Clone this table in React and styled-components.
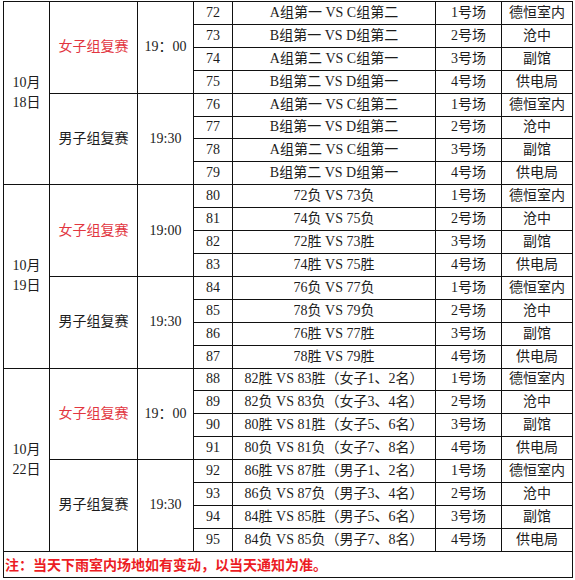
import React from "react";
import styled, { createGlobalStyle } from "styled-components";

const GlobalStyle = createGlobalStyle`
  html, body {
    margin: 0;
    padding: 0;
    background: #fff;
  }
  body {
    font-family: "Liberation Serif", "Noto Sans CJK SC", serif;
    color: #1c1c1c;
  }
`;

const Page = styled.div`
  padding: 1px 0 0 3px;
`;

const Table = styled.table`
  border-collapse: collapse;
  table-layout: fixed;
  width: 570px;
  font-size: 14px;
`;

const Col = styled.col`
  width: ${({ $w }) => $w}px;
`;

const Cell = styled.td`
  border: 1px solid #111;
  padding: 0;
  height: 21.92px;
  text-align: center;
  vertical-align: middle;
  line-height: 18px;
  white-space: nowrap;
  overflow: hidden;
`;

const DateCell = styled(Cell)`
  line-height: 20px;
  white-space: normal;
`;

const GroupCell = styled(Cell)`
  color: ${({ $women }) => ($women ? "#e2363f" : "#1c1c1c")};
`;

const NoteCell = styled(Cell)`
  height: 25px;
  text-align: left;
  padding-left: 1px;
  color: #ec1c24;
  font-weight: bold;
  font-family: "Noto Sans CJK SC", sans-serif;
`;

const venues = [
  ["1号场", "德恒室内"],
  ["2号场", "沧中"],
  ["3号场", "副馆"],
  ["4号场", "供电局"],
];

const days = [
  {
    date: ["10月", "18日"],
    groups: [
      {
        name: "女子组复赛",
        women: true,
        time: "19：00",
        start: 72,
        games: [
          "A组第一 VS C组第二",
          "B组第一 VS D组第二",
          "A组第二 VS C组第一",
          "B组第二 VS D组第一",
        ],
      },
      {
        name: "男子组复赛",
        time: "19:30",
        start: 76,
        games: [
          "A组第一 VS C组第二",
          "B组第一 VS D组第二",
          "A组第二 VS C组第一",
          "B组第二 VS D组第一",
        ],
      },
    ],
  },
  {
    date: ["10月", "19日"],
    groups: [
      {
        name: "女子组复赛",
        women: true,
        time: "19:00",
        start: 80,
        games: ["72负 VS 73负", "74负 VS 75负", "72胜 VS 73胜", "74胜 VS 75胜"],
      },
      {
        name: "男子组复赛",
        time: "19:30",
        start: 84,
        games: ["76负 VS 77负", "78负 VS 79负", "76胜 VS 77胜", "78胜 VS 79胜"],
      },
    ],
  },
  {
    date: ["10月", "22日"],
    groups: [
      {
        name: "女子组复赛",
        women: true,
        time: "19：00",
        start: 88,
        games: [
          "82胜 VS 83胜（女子1、2名）",
          "82负 VS 83负（女子3、4名）",
          "80胜 VS 81胜（女子5、6名）",
          "80负 VS 81负（女子7、8名）",
        ],
      },
      {
        name: "男子组复赛",
        time: "19:30",
        start: 92,
        games: [
          "86胜 VS 87胜（男子1、2名）",
          "86负 VS 87负（男子3、4名）",
          "84胜 VS 85胜（男子5、6名）",
          "84负 VS 85负（男子7、8名）",
        ],
      },
    ],
  },
];

const widths = [46, 88, 56, 39, 203, 66, 71];

export default function App() {
  return (
    <Page>
      <GlobalStyle />
      <Table>
        <colgroup>
          {widths.map((w, i) => (
            <Col key={i} $w={w} />
          ))}
        </colgroup>
        <tbody>
          {days.map((day) =>
            day.groups.map((group, gi) =>
              group.games.map((game, i) => (
                <tr key={group.start + i}>
                  {gi === 0 && i === 0 && (
                    <DateCell rowSpan={8}>
                      {day.date[0]}
                      <br />
                      {day.date[1]}
                    </DateCell>
                  )}
                  {i === 0 && (
                    <>
                      <GroupCell rowSpan={4} $women={group.women}>
                        {group.name}
                      </GroupCell>
                      <Cell rowSpan={4}>{group.time}</Cell>
                    </>
                  )}
                  <Cell>{group.start + i}</Cell>
                  <Cell>{game}</Cell>
                  <Cell>{venues[i][0]}</Cell>
                  <Cell>{venues[i][1]}</Cell>
                </tr>
              ))
            )
          )}
          <tr>
            <NoteCell colSpan={7}>
              注：当天下雨室内场地如有变动，以当天通知为准。
            </NoteCell>
          </tr>
        </tbody>
      </Table>
    </Page>
  );
}
